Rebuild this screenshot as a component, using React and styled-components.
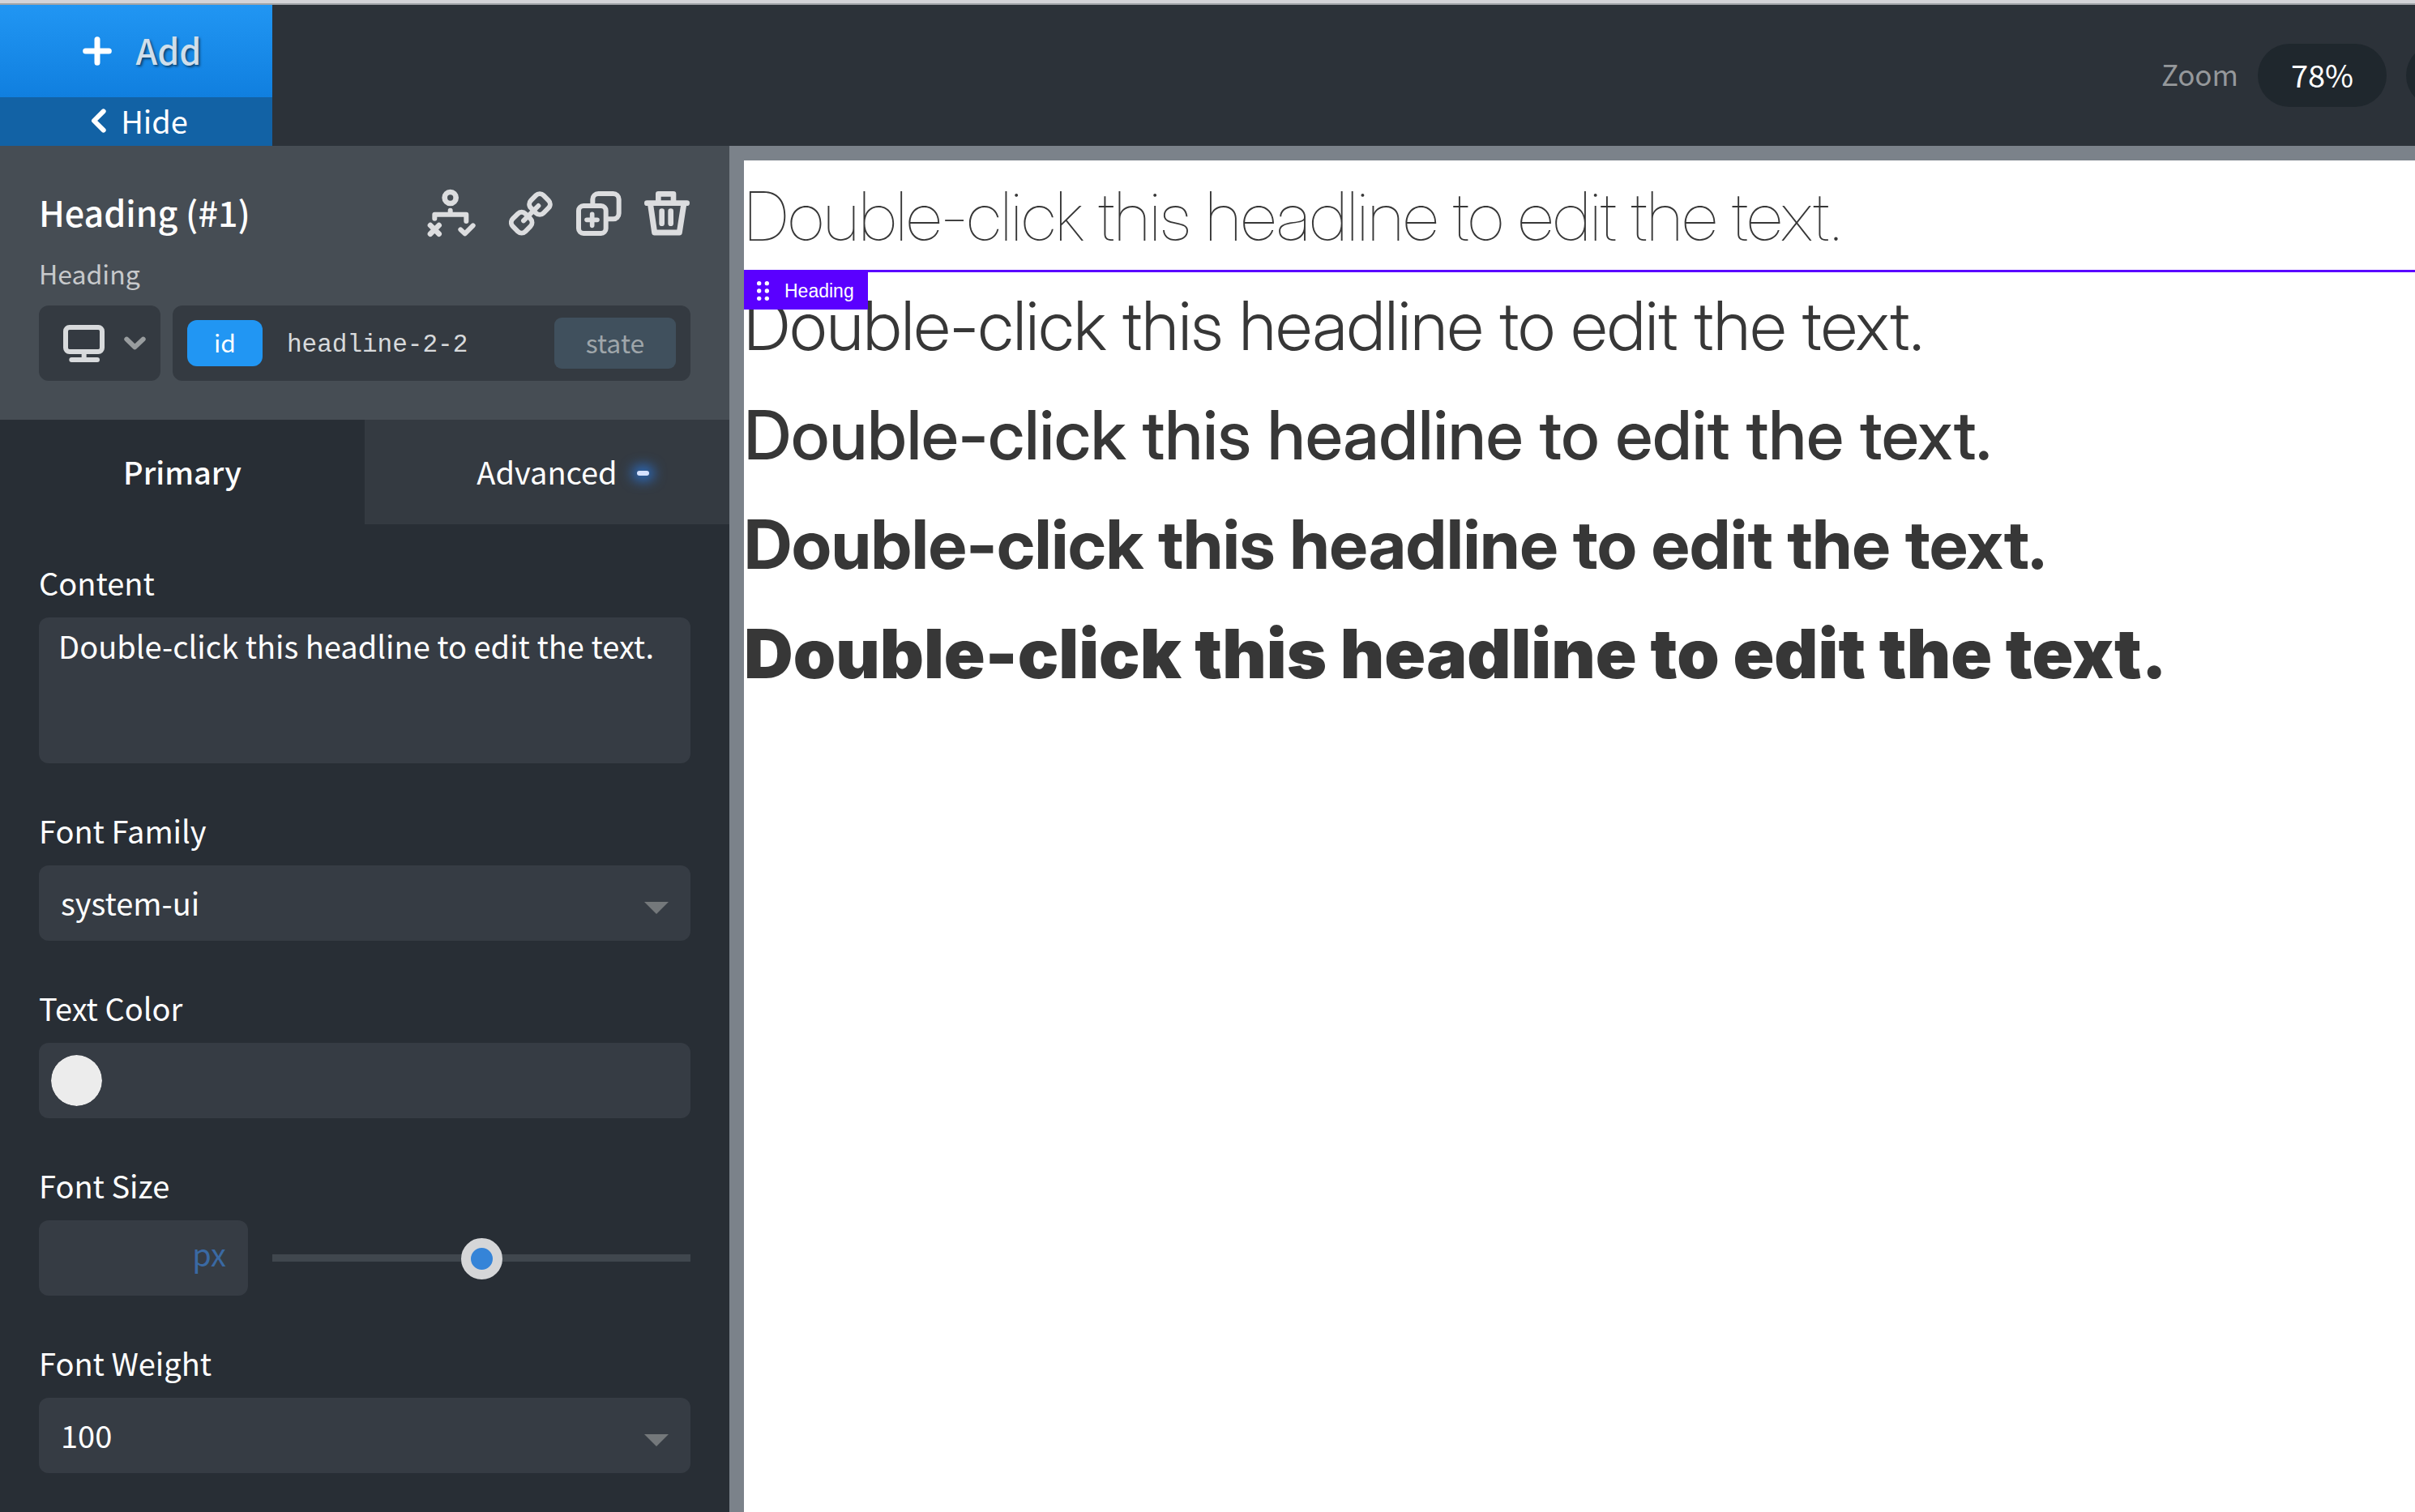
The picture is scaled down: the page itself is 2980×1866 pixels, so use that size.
import React, { useState } from "react";
import styled, { createGlobalStyle, css } from "styled-components";

const ui = '"Noto Sans CJK SC", "Noto Sans", sans-serif';

const GlobalStyle = createGlobalStyle`
  * { box-sizing: border-box; }
  body { margin: 0; background: #282e35; font-family: ${ui}; font-size: 38px; color: #fff; }
  button, input, textarea, select {
    margin: 0; padding: 0; border: 0; background: none; color: inherit; font: inherit; outline: none;
  }
  button { cursor: pointer; }
  svg { display: block; fill: none; stroke: currentColor; stroke-width: 18; stroke-linecap: round; stroke-linejoin: round; }
`;

const App = styled.div`
  display: flex;
  flex-direction: column;
  height: 100vh;
  overflow: hidden;
  border-top: 4px solid #d4d4d8;
`;

const Toolbar = styled.header`
  display: flex;
  flex: none;
  height: 176px;
  border-top: 2px solid #a1a4a8;
  background: #2c3239;
  overflow: hidden;
`;

const AddGroup = styled.div`
  display: flex;
  flex-direction: column;
  flex: none;
  width: 336px;
`;

const AddButton = styled.button`
  display: flex;
  align-items: center;
  justify-content: center;
  gap: 30px;
  height: 114px;
  padding-left: 14px;
  background: linear-gradient(#2196f3, #107fdf);
  svg { stroke-width: 21; }
`;

const AddText = styled.span`
  font-size: 43px;
  line-height: 60px;
  font-weight: 500;
  padding-bottom: 4px;
  color: #cfdeeb;
  text-shadow: 2px 2px 3px rgba(0, 0, 0, 0.5);
`;

const HideButton = styled.button`
  display: flex;
  align-items: center;
  justify-content: center;
  gap: 18px;
  flex: 1;
  padding: 0 0 2px 8px;
  line-height: 58px;
  background: #1262a5;
`;

const ZoomGroup = styled.div`
  display: flex;
  align-items: center;
  gap: 24px;
  margin-left: auto;
  margin-right: -67px;
`;

const ZoomLabel = styled.span`
  font-size: 35px;
  line-height: 60px;
  padding-bottom: 4px;
  color: #95989b;
`;

const Pill = styled.button`
  flex: none;
  width: ${(p) => (p.$round ? 78 : 159)}px;
  height: 78px;
  padding-bottom: 2px;
  border-radius: 39px;
  line-height: 60px;
  background: #1f272d;
`;

const Main = styled.div`
  display: flex;
  flex: 1;
  min-height: 0;
`;

const Sidebar = styled.aside`
  flex: none;
  width: 900px;
  overflow: hidden;
  background: #282e35;
`;

const ElementPanel = styled.section`
  padding: 53px 48px 48px;
  background: #464d54;
`;

const TitleRow = styled.div`
  display: flex;
  align-items: center;
  justify-content: space-between;
  height: 60px;
`;

const Title = styled.h2`
  margin: 0;
  padding-bottom: 4px;
  font-size: 43px;
  line-height: 60px;
  font-weight: 500;
`;

const Actions = styled.div`
  display: flex;
  align-items: center;
  gap: 28px;
  padding-right: 1px;
`;

const IconButton = styled.button`
  display: flex;
  justify-content: center;
  width: ${(p) => (p.$wide ? 84 : 56)}px;
  color: #dcdddf;
`;

const Kind = styled.p`
  margin: 21px 0 17px;
  font-size: 32px;
  line-height: 46px;
  color: #c7c9cb;
`;

const Selectors = styled.div`
  display: flex;
  gap: 15px;
`;

const DeviceButton = styled.button`
  display: flex;
  align-items: center;
  justify-content: center;
  gap: 24px;
  width: 150px;
  height: 93px;
  padding-left: 12px;
  border-radius: 12px;
  background: #343a41;
  color: #d8dadc;
`;

const Muted = styled.span`
  color: #999d9f;
`;

const SelectorBox = styled.div`
  display: flex;
  flex: 1;
  align-items: center;
  min-width: 0;
  height: 93px;
  padding: 0 18px;
  border-radius: 12px;
  background: #343a41;
`;

const Chip = styled.button`
  flex: none;
  padding-bottom: 4px;
  ${(p) =>
    p.$active
      ? css`width: 93px; height: 57px; font-size: 30px; line-height: 50px; background: #2196f3; color: #fff; border-radius: 12px;`
      : css`width: 150px; height: 63px; font-size: 32px; line-height: 54px; background: #40505d; color: #9fa6aa; border-radius: 9px;`}
`;

const SelectorInput = styled.input`
  flex: 1;
  min-width: 0;
  padding: 4px 0 0 30px;
  font-family: "Liberation Mono", monospace;
  font-size: 31px;
  line-height: 60px;
  color: #d8dadc;
`;

const Tabs = styled.div`
  display: flex;
`;

const Tab = styled.button`
  flex: 1;
  height: 129px;
  padding-bottom: 2px;
  line-height: 60px;
  font-weight: ${(p) => (p.$active ? 500 : 400)};
  background: ${(p) => (p.$active ? "#282e35" : "#343a41")};
`;

const TabText = styled.span`
  position: relative;
`;

const Indicator = styled.i`
  position: absolute;
  top: 50%;
  right: -39px;
  width: 15px;
  height: 6px;
  border-radius: 3px;
  background: #d6e2ff;
  box-shadow: 0 0 15px 6px #2c6cc0;
`;

const Fields = styled.form`
  display: flex;
  flex-direction: column;
  gap: 56px;
  padding: 45px 48px;
`;

const Field = styled.div`
  display: flex;
  flex-direction: column;
  gap: 16px;
`;

const Label = styled.label`
  line-height: 54px;
`;

const box = css`
  border-radius: 12px;
  background: #363c44;
`;

const TextArea = styled.textarea`
  ${box}
  display: block;
  height: 180px;
  padding: 8px 24px;
  line-height: 54px;
  resize: none;
`;

const SelectWrap = styled.div`
  position: relative;
  &::after {
    content: "";
    position: absolute;
    right: 27px;
    top: 45px;
    border: 15px solid transparent;
    border-top-color: #74787b;
    border-bottom: 0;
    pointer-events: none;
  }
`;

const Select = styled.select`
  ${box}
  display: block;
  appearance: none;
  width: 100%;
  height: 93px;
  padding: 0 27px 2px;
`;

const ColorBox = styled.div`
  ${box}
  display: flex;
  align-items: center;
  height: 93px;
  padding: 0 15px;
`;

const Swatch = styled.input`
  appearance: none;
  width: 63px;
  height: 63px;
  border-radius: 50%;
  overflow: hidden;
  &::-webkit-color-swatch-wrapper { padding: 0; }
  &::-webkit-color-swatch { border: 0; border-radius: 50%; }
`;

const SizeRow = styled.div`
  display: flex;
  align-items: center;
  gap: 30px;
`;

const SizeBox = styled.div`
  ${box}
  display: flex;
  align-items: center;
  width: 258px;
  height: 93px;
  padding: 0 27px 12px;
`;

const SizeInput = styled.input`
  flex: 1;
  min-width: 0;
`;

const Unit = styled.button`
  line-height: 60px;
  color: #3a69a3;
`;

const Range = styled.input`
  appearance: none;
  flex: 1;
  min-width: 0;
  height: 51px;
  &::-webkit-slider-runnable-track {
    height: 9px;
    background: #40474e;
  }
  &::-webkit-slider-thumb {
    appearance: none;
    width: 51px;
    height: 51px;
    margin-top: -20px;
    border: 12px solid #d5d6d8;
    border-radius: 50%;
    background: #3584d8;
  }
`;

const Stage = styled.main`
  flex: 1;
  min-width: 0;
  border: solid #7b828a;
  border-width: 18px 0 0 18px;
  background: #fff;
  color: #373737;
  overflow: hidden;
`;

const Headline = styled.h1`
  position: relative;
  margin: 0;
  padding-top: 2px;
  font-family: ${(p) => (p.$weight > 700 ? "Inter" : '"Inter Display", Inter')}, sans-serif;
  font-size: 84px;
  line-height: 133px;
  font-weight: ${(p) => p.$weight};
  white-space: nowrap;
  ${(p) => p.$selected && css`box-shadow: inset 0 3px #5a00ff;`}
`;

const Tag = styled.span`
  position: absolute;
  top: 0;
  left: 0;
  display: flex;
  align-items: center;
  gap: 19px;
  height: 49px;
  padding: 3px 17px 0 16px;
  background: #5a00ff;
  color: #fff;
  font: 23px/44px "Liberation Sans", sans-serif;
`;

const PlusIcon = () => (
  <svg width="36" height="36" viewBox="0 0 108 108"><path d="M54 11V97M11 54H97" /></svg>
);
const BackIcon = () => (
  <svg width="19" height="30" viewBox="0 0 57 90"><path d="M47 10L12 45L47 80" /></svg>
);
const ConditionIcon = () => (
  <svg width="60" height="60" viewBox="0 0 180 180">
    <circle cx="86" cy="33" r="21" strokeWidth="20" />
    <path d="M86 80V94M28 110V95H145V120" />
    <path strokeWidth="20" d="M12 135L44 167M44 135L12 167" />
    <path d="M124 151L140 166L170 136" />
  </svg>
);
const LinkIcon = () => (
  <svg width="54" height="55" viewBox="0 0 162 165">
    <rect x="81" y="15" width="66" height="66" rx="20" transform="rotate(45 114 48)" />
    <rect x="14" y="83" width="66" height="66" rx="20" transform="rotate(45 47 116)" />
    <path d="M54 109L109 54" />
  </svg>
);
const DuplicateIcon = () => (
  <svg width="56" height="55" viewBox="0 0 168 165">
    <rect x="9" y="54" width="101" height="102" rx="18" />
    <path strokeWidth="17" d="M59 85V127M39 106H78" />
    <path strokeLinecap="butt" d="M61 50V30a21 21 0 0 1 21-21H137a21 21 0 0 1 21 21V82a21 21 0 0 1-21 21H114" />
  </svg>
);
const TrashIcon = () => (
  <svg width="56" height="55" viewBox="0 0 168 165">
    <path strokeWidth="20" d="M10 44H158M52 40V10H108V40M65 74V119M98 74V119" />
    <path strokeWidth="21" d="M23 50L38 153H130L146 50" />
  </svg>
);
const DesktopIcon = () => (
  <svg width="51" height="46" viewBox="0 0 153 138">
    <rect x="9" y="9" width="135" height="90" rx="14" />
    <path d="M77 104V126M31 129H126" />
  </svg>
);
const ChevronIcon = () => (
  <svg width="27" height="17" viewBox="0 0 81 51"><path d="M10 11L40 40L71 11" /></svg>
);
const GripIcon = () => (
  <svg width="15" height="24" viewBox="0 0 45 72">
    {[8, 36, 64].map((y) => (
      <g key={y} fill="currentColor" stroke="none">
        <circle cx="8" cy={y} r="8" />
        <circle cx="37" cy={y} r="8" />
      </g>
    ))}
  </svg>
);

const SENTENCE = "Double-click this headline to edit the text.";
const WEIGHTS = [100, 300, 500, 700, 900];

function SelectField({ id, label, options }) {
  const [value, setValue] = useState(options[0]);
  return (
    <Field>
      <Label htmlFor={id}>{label}</Label>
      <SelectWrap>
        <Select id={id} value={value} onChange={(e) => setValue(e.target.value)}>
          {options.map((o) => <option key={o}>{o}</option>)}
        </Select>
      </SelectWrap>
    </Field>
  );
}

export default function Builder() {
  return (
    <App>
      <GlobalStyle />
      <Toolbar>
        <AddGroup>
          <AddButton type="button"><PlusIcon /><AddText>Add</AddText></AddButton>
          <HideButton type="button"><BackIcon />Hide</HideButton>
        </AddGroup>
        <ZoomGroup>
          <ZoomLabel>Zoom</ZoomLabel>
          <Pill type="button">78%</Pill>
          <Pill type="button" $round aria-label="More" />
        </ZoomGroup>
      </Toolbar>
      <Main>
        <Sidebar>
          <ElementPanel>
            <TitleRow>
              <Title>Heading (#1)</Title>
              <Actions>
                <IconButton type="button" $wide aria-label="Conditions"><ConditionIcon /></IconButton>
                <IconButton type="button" aria-label="Link"><LinkIcon /></IconButton>
                <IconButton type="button" aria-label="Duplicate"><DuplicateIcon /></IconButton>
                <IconButton type="button" aria-label="Delete"><TrashIcon /></IconButton>
              </Actions>
            </TitleRow>
            <Kind>Heading</Kind>
            <Selectors>
              <DeviceButton type="button" aria-label="Device">
                <DesktopIcon />
                <Muted><ChevronIcon /></Muted>
              </DeviceButton>
              <SelectorBox>
                <Chip type="button" $active>id</Chip>
                <SelectorInput aria-label="Selector" defaultValue="headline-2-2" />
                <Chip type="button">state</Chip>
              </SelectorBox>
            </Selectors>
          </ElementPanel>
          <Tabs role="tablist">
            <Tab type="button" role="tab" aria-selected="true" $active>Primary</Tab>
            <Tab type="button" role="tab" aria-selected="false">
              <TabText>Advanced<Indicator /></TabText>
            </Tab>
          </Tabs>
          <Fields>
            <Field>
              <Label htmlFor="content">Content</Label>
              <TextArea id="content" defaultValue={SENTENCE} spellCheck={false} />
            </Field>
            <SelectField id="family" label="Font Family" options={["system-ui"]} />
            <Field>
              <Label htmlFor="color">Text Color</Label>
              <ColorBox><Swatch id="color" type="color" defaultValue="#ececec" /></ColorBox>
            </Field>
            <Field>
              <Label htmlFor="size">Font Size</Label>
              <SizeRow>
                <SizeBox>
                  <SizeInput id="size" type="text" />
                  <Unit type="button">px</Unit>
                </SizeBox>
                <Range type="range" min="0" max="100" defaultValue="50" aria-label="Font size" />
              </SizeRow>
            </Field>
            <SelectField id="weight" label="Font Weight" options={["100", "400", "600", "700", "900"]} />
          </Fields>
        </Sidebar>
        <Stage>
          {WEIGHTS.map((w, i) => (
            <Headline key={w} $weight={w} $selected={i === 1}>
              {SENTENCE}
              {i === 1 && <Tag><GripIcon />Heading</Tag>}
            </Headline>
          ))}
        </Stage>
      </Main>
    </App>
  );
}
